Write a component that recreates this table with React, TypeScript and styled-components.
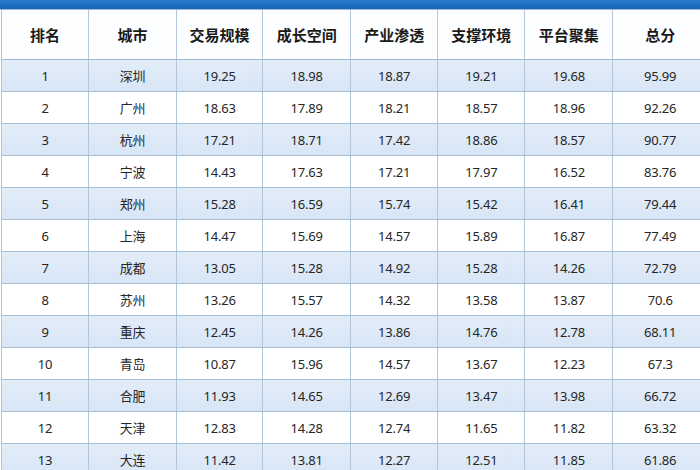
import React from "react";
import styled, { createGlobalStyle } from "styled-components";

const Global = createGlobalStyle`
  html, body { margin: 0; padding: 0; background: #ffffff; }
  body { width: 700px; height: 470px; overflow: hidden; }
`;

const Page = styled.div`
  width: 700px;
  height: 470px;
  overflow: hidden;
  background: #ffffff;
  display: flex;
  flex-direction: column;
`;

const TopBar = styled.div`
  height: 9px;
  flex: none;
  background: linear-gradient(#2a7bd0, #1565bb);
  border-bottom: 1px solid #9fb9d6;
`;

const Table = styled.table`
  border-collapse: collapse;
  table-layout: fixed;
  width: 706px;
  margin-left: 1px;
  font-family: "Noto Sans", "Noto Sans CJK SC", sans-serif;
`;

const HeadCell = styled.th`
  height: 49px;
  padding: 0;
  border-left: 1px solid #b4c6da;
  border-bottom: 1px solid #9fb6d0;
  background: #fdfeff;
  color: #1a1a1a;
  font-family: "Noto Sans CJK SC", sans-serif;
  font-weight: 700;
  font-size: 15px;
  text-align: center;
  vertical-align: middle;
`;

const Row = styled.tr<{ $shaded: boolean }>`
  background: ${(p) => (p.$shaded ? "linear-gradient(#e3edf9, #d7e5f5)" : "#ffffff")};
`;

const Cell = styled.td<{ $cjk?: boolean }>`
  height: 31px;
  padding: 0;
  border-left: 1px solid #b4c6da;
  border-bottom: 1px solid #a9bdd4;
  color: #262626;
  font-family: ${(p) => (p.$cjk ? `"Noto Sans CJK SC", sans-serif` : `"Noto Sans", "Noto Sans CJK SC", sans-serif`)};
  font-size: 13px;
  text-align: center;
  vertical-align: middle;
  letter-spacing: -0.2px;
`;

const widths = [87, 88, 86, 88, 87, 87, 88, 94];
const headers = ["排名", "城市", "交易规模", "成长空间", "产业渗透", "支撑环境", "平台聚集", "总分"];

const data: [string, string, string, string, string, string, string, string][] = [
  ["1", "深圳", "19.25", "18.98", "18.87", "19.21", "19.68", "95.99"],
  ["2", "广州", "18.63", "17.89", "18.21", "18.57", "18.96", "92.26"],
  ["3", "杭州", "17.21", "18.71", "17.42", "18.86", "18.57", "90.77"],
  ["4", "宁波", "14.43", "17.63", "17.21", "17.97", "16.52", "83.76"],
  ["5", "郑州", "15.28", "16.59", "15.74", "15.42", "16.41", "79.44"],
  ["6", "上海", "14.47", "15.69", "14.57", "15.89", "16.87", "77.49"],
  ["7", "成都", "13.05", "15.28", "14.92", "15.28", "14.26", "72.79"],
  ["8", "苏州", "13.26", "15.57", "14.32", "13.58", "13.87", "70.6"],
  ["9", "重庆", "12.45", "14.26", "13.86", "14.76", "12.78", "68.11"],
  ["10", "青岛", "10.87", "15.96", "14.57", "13.67", "12.23", "67.3"],
  ["11", "合肥", "11.93", "14.65", "12.69", "13.47", "13.98", "66.72"],
  ["12", "天津", "12.83", "14.28", "12.74", "11.65", "11.82", "63.32"],
  ["13", "大连", "11.42", "13.81", "12.27", "12.51", "11.85", "61.86"],
];

export default function App() {
  return (
    <Page>
      <Global />
      <TopBar />
      <Table>
        <colgroup>
          {widths.map((w, i) => (
            <col key={i} style={{ width: w }} />
          ))}
        </colgroup>
        <thead>
          <tr>
            {headers.map((h) => (
              <HeadCell key={h}>{h}</HeadCell>
            ))}
          </tr>
        </thead>
        <tbody>
          {data.map((r, i) => (
            <Row key={r[0]} $shaded={i % 2 === 0}>
              {r.map((v, j) => (
                <Cell key={j} $cjk={j === 1}>
                  {v}
                </Cell>
              ))}
            </Row>
          ))}
        </tbody>
      </Table>
    </Page>
  );
}
